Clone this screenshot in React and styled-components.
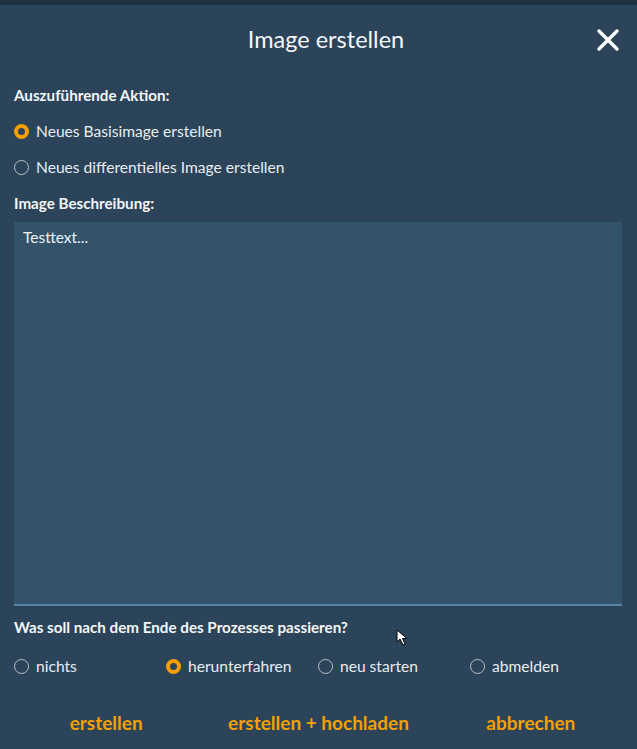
import React, { useState } from "react";
import styled, { createGlobalStyle } from "styled-components";

const Global = createGlobalStyle`
  html, body { margin: 0; padding: 0; background: #2b4459; overflow: hidden; }
  body { font-family: Lato, "Noto Sans", sans-serif; color: #f2f4f6; }
  * { box-sizing: border-box; }
`;

const Page = styled.div`
  position: relative;
  width: 637px;
  height: 749px;
  background: #2b4459;
  border-top: 5px solid #1f3242;
  display: flex;
  flex-direction: column;
  overflow: hidden;
`;

const Header = styled.div`
  position: relative;
  height: 72px;
  flex: none;
  display: flex;
  align-items: center;
  justify-content: center;
  padding: 0 0 4px 15px;
`;

const Title = styled.h1`
  margin: 0;
  font-size: 23.5px;
  font-weight: 400;
  color: #f4f6f8;
`;

const Close = styled.button`
  position: absolute;
  right: 16px;
  top: 22px;
  width: 26px;
  height: 26px;
  padding: 0;
  border: 0;
  background: none;
  cursor: pointer;
  display: flex;
  align-items: center;
  justify-content: center;
`;

const Body = styled.div`
  flex: none;
  padding: 0 15px 0 14px;
  display: flex;
  flex-direction: column;
`;

const Label = styled.div`
  font-size: 15.2px;
  font-weight: 700;
  color: #f4f6f8;
  height: ${(p) => p.$h || 36}px;
  display: flex;
  align-items: center;
`;

const RadioRow = styled.label`
  display: flex;
  align-items: center;
  gap: 7px;
  height: 36px;
  font-size: 15.6px;
  color: #e8ecf0;
  cursor: pointer;
`;

const Dot = styled.span`
  width: 15px;
  height: 15px;
  border-radius: 50%;
  flex: none;
  border: ${(p) => (p.$on ? "4.5px solid #f5a000" : "1.5px solid #b9c0c6")};
  background: ${(p) => (p.$on ? "#2b4459" : "transparent")};
`;

const TextArea = styled.textarea`
  display: block;
  width: 608px;
  height: 384px;
  margin-top: 1px;
  resize: none;
  border: 0;
  border-bottom: 2px solid #5b84a6;
  background: #33536a;
  color: #eef2f5;
  font-family: Lato, "Noto Sans", sans-serif;
  font-size: 15.5px;
  padding: 6px 9px;
  outline: none;
`;

const Options = styled.div`
  display: grid;
  grid-template-columns: repeat(4, 152px);
  height: 36px;
  align-items: center;
`;

const Actions = styled.div`
  flex: none;
  display: grid;
  grid-template-columns: repeat(3, 1fr);
  align-items: center;
  height: 65px;
  padding-top: 11px;
`;

const Action = styled.button`
  border: 0;
  background: none;
  font-family: Lato, "Noto Sans", sans-serif;
  font-size: 19px;
  font-weight: 700;
  color: #f5a000;
  cursor: pointer;
  justify-self: center;
  padding: 0;
`;

const Cursor = styled.svg`
  position: absolute;
  left: 396px;
  top: 624px;
`;

function Radio({ on, children, onClick }) {
  return (
    <RadioRow onClick={onClick}>
      <Dot $on={on} />
      {children}
    </RadioRow>
  );
}

export default function App() {
  const [action, setAction] = useState(0);
  const [after, setAfter] = useState(1);
  const afters = ["nichts", "herunterfahren", "neu starten", "abmelden"];
  return (
    <>
      <Global />
      <Page>
        <Header>
          <Title>Image erstellen</Title>
          <Close aria-label="schließen">
            <svg width="24" height="24" viewBox="0 0 24 24">
              <path d="M3 3 L21 21 M21 3 L3 21" stroke="#fff" strokeWidth="3.4" strokeLinecap="round" />
            </svg>
          </Close>
        </Header>
        <Body>
          <Label $h={36}>Auszuführende Aktion:</Label>
          <Radio on={action === 0} onClick={() => setAction(0)}>Neues Basisimage erstellen</Radio>
          <Radio on={action === 1} onClick={() => setAction(1)}>Neues differentielles Image erstellen</Radio>
          <Label $h={36}>Image Beschreibung:</Label>
          <TextArea defaultValue="Testtext..." />
          <Label $h={42}>Was soll nach dem Ende des Prozesses passieren?</Label>
          <Options>
            {afters.map((a, i) => (
              <Radio key={a} on={after === i} onClick={() => setAfter(i)}>{a}</Radio>
            ))}
          </Options>
        </Body>
        <Actions>
          <Action>erstellen</Action>
          <Action>erstellen + hochladen</Action>
          <Action>abbrechen</Action>
        </Actions>
        <Cursor width="14" height="18" viewBox="0 0 14 18">
          <path d="M1 1 L1 13 L4 10 L7 16 L9 15 L6.5 9.5 L11 9.5 Z" fill="#fff" stroke="#000" strokeWidth="1" strokeLinejoin="round" />
        </Cursor>
      </Page>
    </>
  );
}
